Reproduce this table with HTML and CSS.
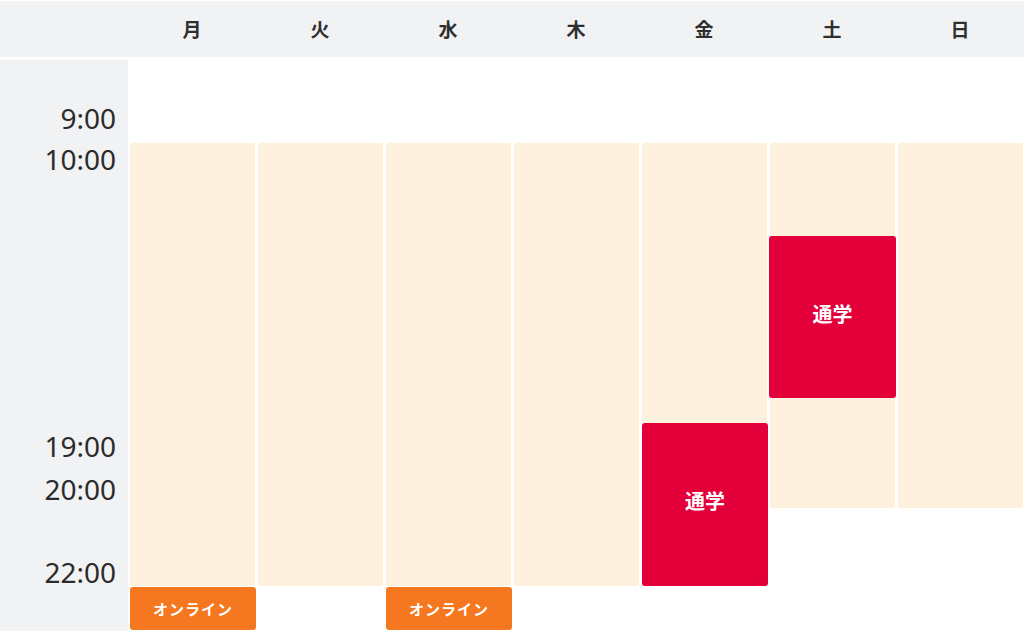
FILE: index.html
```html
<!DOCTYPE html>
<html lang="ja">
<head>
<meta charset="utf-8">
<title>時間割</title>
<link rel="stylesheet" href="styles.css">
</head>
<body>
<div class="schedule">
  <div class="head">
    <div class="head-corner"></div>
    <div class="day">月</div>
    <div class="day">火</div>
    <div class="day">水</div>
    <div class="day">木</div>
    <div class="day">金</div>
    <div class="day">土</div>
    <div class="day">日</div>
  </div>
  <div class="grid">
    <div class="time-col"></div>
    <div class="time t9">9:00</div>
    <div class="time t10">10:00</div>
    <div class="time t19">19:00</div>
    <div class="time t20">20:00</div>
    <div class="time t22">22:00</div>

    <div class="slot c-mon long"></div>
    <div class="slot c-tue long"></div>
    <div class="slot c-wed long"></div>
    <div class="slot c-thu long"></div>
    <div class="slot c-fri long"></div>
    <div class="slot c-sat short"></div>
    <div class="slot c-sun short"></div>

    <div class="event school c-fri ev-fri">通学</div>
    <div class="event school c-sat ev-sat">通学</div>
    <div class="event online c-mon ev-online">オンライン</div>
    <div class="event online c-wed ev-online">オンライン</div>
  </div>
</div>
</body>
</html>
```

FILE: styles.css
```css
html, body {
  margin: 0;
  padding: 0;
  background: #ffffff;
}

body {
  font-family: "Noto Sans CJK JP", "Noto Sans", sans-serif;
  color: #333333;
  width: 1024px;
  height: 631px;
  overflow: hidden;
}

.head {
  display: grid;
  grid-template-columns: 128px repeat(7, 128px);
  height: 56px;
  margin-top: 1px;
  background: #f1f2f4;
}

.day {
  display: flex;
  align-items: center;
  justify-content: center;
  font-size: 19px;
  font-weight: 700;
  color: #2f2f2f;
  padding-bottom: 2px;
}

.grid {
  margin-top: 3px;
  display: grid;
  grid-template-columns: 128px repeat(7, 128px);
  grid-template-rows: 83px 93px 162px 25px 85px 78px 45px;
}

.time-col {
  grid-column: 1;
  grid-row: 1 / 8;
  background: #f1f2f4;
}

.time {
  grid-column: 1;
  font-family: "Noto Sans", "Lato", sans-serif;
  font-size: 28px;
  line-height: 24px;
  color: #2b2b2b;
  text-align: right;
  padding-right: 12px;
}

.t9 { grid-row: 1; align-self: end; margin-bottom: 13px; }
.t10 { grid-row: 2; align-self: start; margin-top: 4px; }
.t19 { grid-row: 5; align-self: start; margin-top: 11px; }
.t20 { grid-row: 5; align-self: end; margin-bottom: 7px; }
.t22 { grid-row: 6; align-self: end; margin-bottom: 2px; }

.c-mon { grid-column: 2; }
.c-tue { grid-column: 3; }
.c-wed { grid-column: 4; }
.c-thu { grid-column: 5; }
.c-fri { grid-column: 6; }
.c-sat { grid-column: 7; }
.c-sun { grid-column: 8; }

.slot {
  background: #fdf1de;
  margin: 0 1px 0 2px;
  border-radius: 2px;
}

.slot.long { grid-row: 2 / 7; }
.slot.short { grid-row: 2 / 6; }

.event {
  display: flex;
  align-items: center;
  justify-content: center;
  color: #ffffff;
  font-weight: 700;
  border-radius: 3px;
}

.school {
  background: #e3003a;
  font-size: 20px;
  padding-bottom: 8px;
}

.ev-fri { grid-row: 5 / 7; margin: 0 0 0 2px; }
.ev-sat { grid-row: 3 / 4; margin: 0 0 0 1px; }

.online {
  background: #f5771f;
  font-size: 15px;
  letter-spacing: 1px;
  margin: 1px 0 1px 2px;
}

.ev-online { grid-row: 7; }
```
